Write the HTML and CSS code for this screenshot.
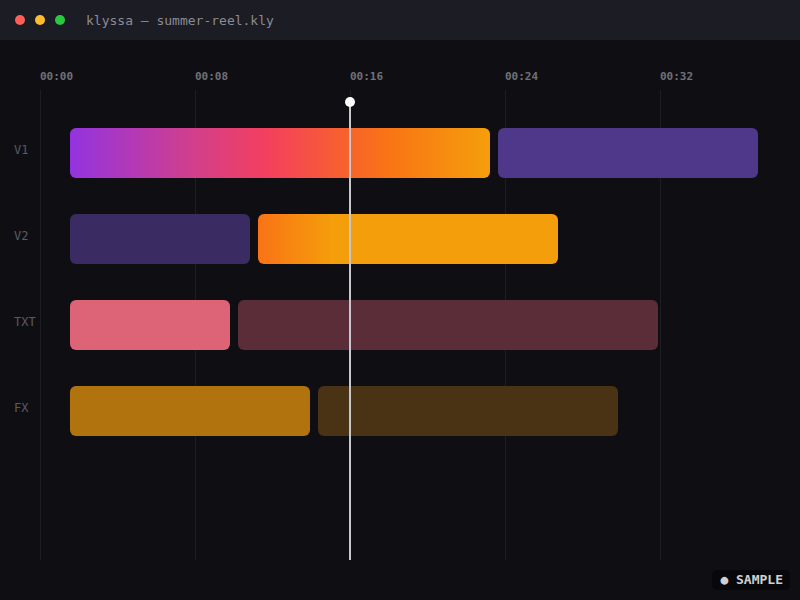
FILE: index.html
```html
<!DOCTYPE html>
<html lang="en">
<head>
    <meta charset="UTF-8">
    <meta name="viewport" content="width=device-width, initial-scale=1.0">
    <title>klyssa — summer-reel.kly</title>
    <link rel="stylesheet" href="styles.css">
</head>
<body>

    <div class="titlebar">
        <span class="dot red"></span>
        <span class="dot yellow"></span>
        <span class="dot green"></span>
        <span class="title">klyssa — summer-reel.kly</span>
    </div>

    <div class="timeline">
        <!-- ruler: 155px per 8 seconds -->
        <div class="ruler">
            <span class="tick" style="left: 40px">00:00</span>
            <span class="tick" style="left: 195px">00:08</span>
            <span class="tick" style="left: 350px">00:16</span>
            <span class="tick" style="left: 505px">00:24</span>
            <span class="tick" style="left: 660px">00:32</span>
        </div>

        <div class="gridline" style="left: 40px"></div>
        <div class="gridline" style="left: 195px"></div>
        <div class="gridline" style="left: 350px"></div>
        <div class="gridline" style="left: 505px"></div>
        <div class="gridline" style="left: 660px"></div>

        <div class="tracks">
            <div class="track">
                <span class="track-label">V1</span>
                <div class="lane">
                    <div class="clip grad-v1" style="left: 0; width: 420px"></div>
                    <div class="clip violet" style="left: 428px; width: 260px"></div>
                </div>
            </div>
            <div class="track">
                <span class="track-label">V2</span>
                <div class="lane">
                    <div class="clip indigo" style="left: 0; width: 180px"></div>
                    <div class="clip grad-v2" style="left: 188px; width: 300px"></div>
                </div>
            </div>
            <div class="track">
                <span class="track-label">TXT</span>
                <div class="lane">
                    <div class="clip rose" style="left: 0; width: 160px"></div>
                    <div class="clip wine" style="left: 168px; width: 420px"></div>
                </div>
            </div>
            <div class="track">
                <span class="track-label">FX</span>
                <div class="lane">
                    <div class="clip amber" style="left: 0; width: 240px"></div>
                    <div class="clip bronze" style="left: 248px; width: 300px"></div>
                </div>
            </div>
        </div>

        <div class="playhead" style="left: 349px">
            <span class="knob"></span>
        </div>
    </div>

    <div class="badge">● SAMPLE</div>

</body>
</html>
```

FILE: styles.css
```css
body {
    margin: 0;
    width: 800px;
    height: 600px;
    overflow: hidden;
    background-color: #0f0f13;
    font-family: "DejaVu Sans Mono", "Liberation Mono", monospace;
    position: relative;
}
.titlebar {
    height: 40px;
    background-color: #1c1c24;
    display: flex;
    align-items: center;
    padding-left: 15px;
    gap: 10px;
}
.dot {
    width: 10px;
    height: 10px;
    border-radius: 50%;
}
.red { background-color: #ff5f57; }
.yellow { background-color: #febc2e; }
.green { background-color: #28c840; }
.title {
    margin-left: 11px;
    font-size: 13px;
    color: #8b8b94;
}

.timeline {
    position: relative;
    height: 520px;
}
.ruler {
    height: 50px;
}
.tick {
    position: absolute;
    top: 30px;
    font-size: 11px;
    font-weight: 600;
    color: #707078;
}
.gridline {
    position: absolute;
    top: 50px;
    bottom: 0;
    width: 1px;
    background-color: #1d1d23;
}
.tracks {
    position: relative;
    padding-top: 38px;
}
.track {
    height: 86px;
    display: flex;
}
.track-label {
    width: 56px;
    padding-left: 14px;
    line-height: 44px;
    font-size: 12px;
    color: #5a5a62;
}
.lane {
    position: relative;
    flex: 1;
    height: 50px;
}
.clip {
    position: absolute;
    top: 0;
    height: 50px;
    border-radius: 6px;
}
.grad-v1 { background: linear-gradient(90deg, #9333e0 0%, #d33f8a 30%, #f43f5e 47%, #f97316 75%, #f59e0b 100%); }
.violet { background-color: #4f3889; }
.indigo { background-color: #3a2b63; }
.grad-v2 { background: linear-gradient(90deg, #f97316 0%, #f59e0b 25%, #f59e0b 100%); }
.rose { background-color: #dc6476; }
.wine { background-color: #5a2d38; }
.amber { background-color: #b0730e; }
.bronze { background-color: #4a3315; }

.playhead {
    position: absolute;
    top: 62px;
    bottom: 0;
    width: 2px;
    background-color: #c8c8cc;
}
.knob {
    position: absolute;
    top: -5px;
    left: -4px;
    width: 10px;
    height: 10px;
    border-radius: 50%;
    background-color: #ffffff;
}

.badge {
    position: absolute;
    right: 10px;
    bottom: 10px;
    height: 20px;
    line-height: 20px;
    padding: 0 7px 0 8px;
    border-radius: 5px;
    background-color: #08080a;
    color: #d0d0d4;
    font-size: 13px;
    font-weight: bold;
}
```
